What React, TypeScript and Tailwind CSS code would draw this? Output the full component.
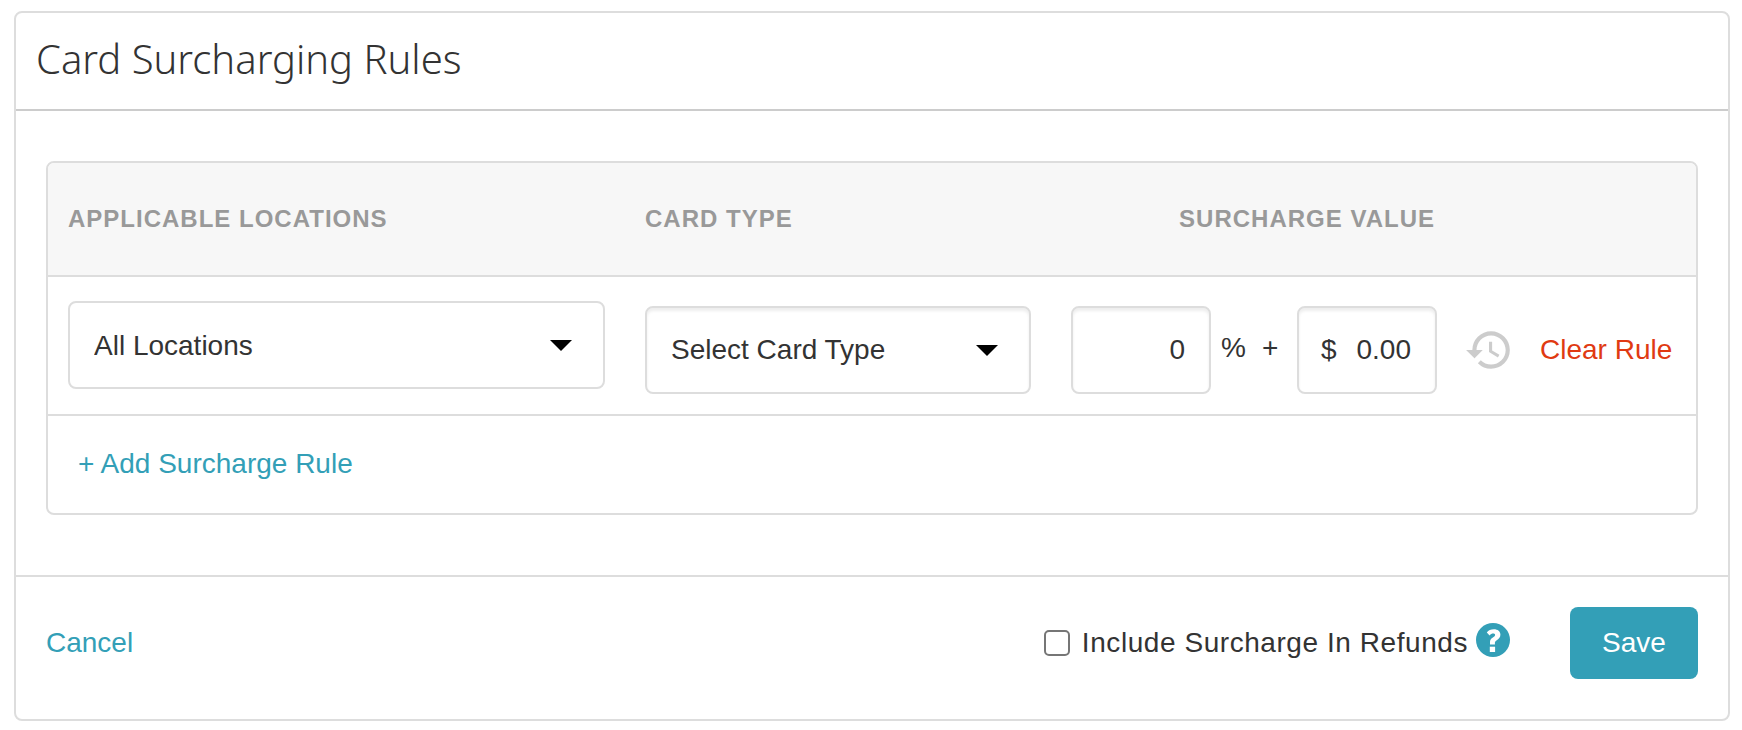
import { useState } from "react";
import { MdHistory } from "react-icons/md";

const fieldBox = "h-[88px] rounded-lg border-2 border-[#ddd] bg-white";
const fieldShadow = "shadow-[inset_0_3px_3px_rgba(0,0,0,0.07)]";

function Caret() {
  return (
    <svg
      viewBox="0 0 22 11"
      className="pointer-events-none absolute inset-y-0 right-[33px] my-auto h-[11px] w-[22px]"
      aria-hidden="true"
    >
      <path d="M0 0h22L11 11z" fill="#000" />
    </svg>
  );
}

type SelectBoxProps = {
  label: string;
  options: string[];
  className?: string;
};

function SelectBox({ label, options, className = "" }: SelectBoxProps) {
  return (
    <div className="relative">
      <select
        aria-label={label}
        className={`${fieldBox} w-full appearance-none px-6 text-[28px] ${className}`}
      >
        {options.map((option) => (
          <option key={option}>{option}</option>
        ))}
      </select>
      <Caret />
    </div>
  );
}

function HelpIcon() {
  return (
    <svg viewBox="0 0 34 34" className="size-[34px]" aria-hidden="true">
      <circle cx="17" cy="17" r="17" fill="#339fb7" />
      <path
        d="M10.800 9.600C12.400 7.400 14.800 6.300 17.900 6.300c3.900 0 6.500 2.200 6.500 5.300 0 2.900-1.500 4.200-3.300 5.400-1.600 1.100-2.200 1.600-2.200 3v1.500h-4.900v-2.400c0-2.300 1.200-3.500 2.900-4.600 1.500-1 2.200-1.500 2.200-2.400 0-1-.7-1.500-1.900-1.500-1.400 0-2.400.6-3.600 1.800z"
        fill="#fff"
      />
      <path d="M13.800 23.700h5.300v5.300h-5.300z" fill="#fff" />
    </svg>
  );
}

export default function App() {
  const [percent, setPercent] = useState("0");
  const [amount, setAmount] = useState("0.00");
  const [refunds, setRefunds] = useState(false);

  return (
    <main className="bg-white pt-[11px] pr-3 pb-[9px] pl-3.5 font-['Liberation_Sans',Arial,sans-serif] text-[28px] leading-8 text-[#333]">
      <section className="rounded-lg border-2 border-[#ddd]">
        <header className="border-b-2 border-[#ccc] px-5 pt-[22px] pb-[26px]">
          <h1 className="font-['Noto_Sans',sans-serif] text-[40px] leading-[48px] font-light">
            Card Surcharging Rules
          </h1>
        </header>

        <div className="px-[30px] pt-[50px] pb-[60px]">
          <div className="overflow-hidden rounded-lg border-2 border-[#ddd]">
            <table className="w-full table-fixed border-separate border-spacing-0">
              <thead>
                <tr className="h-[114px] bg-[#f7f7f7] text-left text-2xl tracking-[1px] text-[#999] uppercase [&>*]:border-b-2 [&>*]:border-[#ddd]">
                  <th className="px-5">Applicable Locations</th>
                  <th className="w-[426px] px-5">Card Type</th>
                  <th className="w-[406px] pr-[22px] pl-5 text-right">Surcharge Value</th>
                  <td className="w-16" />
                  <td className="w-[175px]" />
                </tr>
              </thead>
              <tbody>
                <tr className="[&>td]:border-b-2 [&>td]:border-[#ddd]">
                  <td className="px-5 pt-6 pb-[25px]">
                    <SelectBox
                      label="Applicable locations"
                      options={["All Locations"]}
                      className="pt-0.5"
                    />
                  </td>
                  <td className="px-5 pt-[29px] pb-5">
                    <SelectBox
                      label="Card type"
                      options={["Select Card Type"]}
                      className={fieldShadow}
                    />
                  </td>
                  <td className="px-5 pt-[29px] pb-5">
                    <div className="flex items-center">
                      <input
                        aria-label="Surcharge percent"
                        value={percent}
                        onChange={(e) => setPercent(e.target.value)}
                        className={`${fieldBox} ${fieldShadow} w-[140px] px-6 text-right`}
                      />
                      <span className="ml-2.5 flex gap-4 pb-1">
                        <span>%</span>
                        <span>+</span>
                      </span>
                      <label
                        className={`${fieldBox} ${fieldShadow} ml-auto flex w-[140px] items-center pr-6 pl-[22px]`}
                      >
                        <span>$</span>
                        <input
                          aria-label="Surcharge amount"
                          value={amount}
                          onChange={(e) => setAmount(e.target.value)}
                          className="w-full min-w-0 text-right"
                        />
                      </label>
                    </div>
                  </td>
                  <td className="px-[7px] pt-[29px] pb-5">
                    <MdHistory className="size-[50px] text-[#ccc]" />
                  </td>
                  <td className="px-[19px] pt-[29px] pb-5 whitespace-nowrap">
                    <button type="button" className="text-[#e03a12]">
                      Clear Rule
                    </button>
                  </td>
                </tr>
                <tr>
                  <td colSpan={5} className="h-[97px] px-[30px] pb-0.5">
                    <button type="button" className="text-[#339fb7]">
                      + Add Surcharge Rule
                    </button>
                  </td>
                </tr>
              </tbody>
            </table>
          </div>
        </div>

        <footer className="flex items-center border-t-2 border-[#ddd] px-[30px] pt-[30px] pb-10">
          <a href="#" className="text-[#339fb7]">
            Cancel
          </a>
          <label className="ml-auto flex items-center gap-3 tracking-[0.02em]">
            <input
              type="checkbox"
              checked={refunds}
              onChange={(e) => setRefunds(e.target.checked)}
              className="size-[26px] appearance-none rounded-[5px] border-2 border-[#767676] checked:bg-[#339fb7]"
            />
            Include Surcharge In Refunds
          </label>
          <button type="button" aria-label="Help" className="ml-2 pb-1.5">
            <HelpIcon />
          </button>
          <button
            type="button"
            className="ml-[60px] h-[72px] w-32 rounded-lg bg-[#339fb7] text-white"
          >
            Save
          </button>
        </footer>
      </section>
    </main>
  );
}
